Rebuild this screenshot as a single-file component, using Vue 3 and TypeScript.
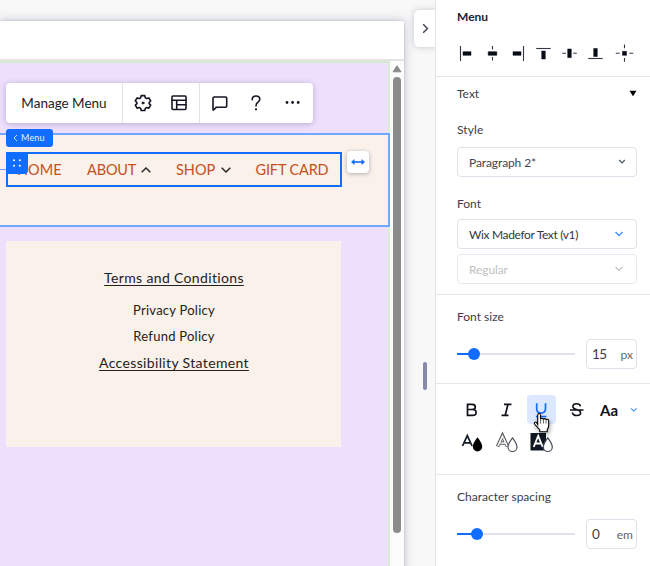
<script setup lang="ts">
import { ref } from 'vue'

interface Align { id: string; thin: string; thick: string }
interface Slider { label: string; value: string; unit: string; fill: number; cls: string }

const aligns: Align[] = [
  { id: 'left', thin: 'M1.5 2v15', thick: 'M4 7.7h8v3.6h-8z' },
  { id: 'center', thin: 'M9.5 2v3.5M9.5 13v3.5', thick: 'M5.2 7.7h8.6v3.6h-8.6z' },
  { id: 'right', thin: 'M15.5 2v15', thick: 'M5 7.7h8v3.6h-8z' },
  { id: 'top', thin: 'M2.2 4.5h14.5', thick: 'M7.7 7h3.6v8h-3.6z' },
  { id: 'middle', thin: 'M2.3 9.3h3.6M13.2 9.3h3.6', thick: 'M7.7 5h3.6v8.6h-3.6z' },
  { id: 'bottom', thin: 'M2.2 14.5h14.5', thick: 'M7.7 4.5h3.6v8h-3.6z' },
  { id: 'both', thin: 'M9.5 .5v3.8M9.5 14v3.8M.8 9.3h3.9M14.4 9.3h3.9', thick: 'M7.500 7.300h4v4h-4z' },
]
const sizeSlider: Slider = { label: 'Font size', value: '15', unit: 'px', fill: 17, cls: 'size' }
const spacingSlider: Slider = { label: 'Character spacing', value: '0', unit: 'em', fill: 20, cls: 'spacing' }
const underlined = ref(true)
</script>

<template>
  <div class="editor">
    <main class="stage">
      <div class="browser">
        <div class="browser-bar"></div>
        <div class="viewport">
          <div class="site">
            <section class="header-section">
              <nav class="nav">
                <span class="item home">HOME</span>
                <span class="item about">ABOUT</span>
                <svg class="caret" width="12" height="8" viewBox="0 0 12 8"><path d="M1.7 6.3 6 2l4.3 4.3" /></svg>
                <span class="item shop">SHOP</span>
                <svg class="caret" width="12" height="8" viewBox="0 0 12 8"><path d="M1.7 1.7 6 6l4.3-4.3" /></svg>
                <span class="item gift">GIFT CARD</span>
              </nav>
            </section>
            <section class="links">
              <a class="terms">Terms and Conditions</a>
              <span class="privacy">Privacy Policy</span>
              <span class="refund">Refund Policy</span>
              <a class="access">Accessibility Statement</a>
            </section>
          </div>
          <div class="scrollbar">
            <svg width="10" height="8" viewBox="0 0 10 8"><path d="M5 .8 9 6.8H1z" fill="#8b8b8b" stroke="#8b8b8b" stroke-linejoin="round" /></svg>
            <div class="scroll-thumb"></div>
          </div>
        </div>
      </div>

      <div class="toolbar">
        <button class="manage">Manage Menu</button>
        <div class="tools pair">
          <svg width="18" height="18" viewBox="0 0 18 18" class="line">
            <path d="M7.200 1.600h3.600l.5 2.100 1.500.9 2.100-.7 1.800 3.100-1.600 1.500v1.100l1.600 1.500-1.800 3.100-2.100-.7-1.500.9-.5 2.100H7.200l-.5-2.100-1.500-.9-2.100.7-1.800-3.100 1.600-1.500V8.500L1.300 7l1.800-3.100 2.100.7 1.500-.9z" />
            <circle cx="9" cy="9" r="1" fill="#161624" stroke-width="1" />
          </svg>
          <svg width="18" height="18" viewBox="0 0 18 18" class="line">
            <rect x="2" y="2" width="14" height="13.500" rx="1" /><path d="M2 6.300h14M6.700 6.300v9M6.700 10.700H16" />
          </svg>
        </div>
        <div class="tools trio">
          <svg width="18" height="18" viewBox="0 0 18 18" class="line"><path d="M2 16V4.200Q2 3 3.200 3H14.500Q15.700 3 15.700 4.200V12Q15.700 13.200 14.500 13.200H5.500L2.600 16z" /></svg>
          <svg width="18" height="18" viewBox="0 0 18 18" class="line"><path d="M5.200 5.700Q5.200 2 9 2T12.800 5.300Q12.800 7.200 10.700 8.500 9 9.500 9 12" /><circle cx="9" cy="15.300" r=".5" stroke-width="1.200" /></svg>
          <svg width="18" height="18" viewBox="0 0 18 18" fill="#161624"><circle cx="4" cy="8.500" r="1.400" /><circle cx="9.600" cy="8.500" r="1.400" /><circle cx="15.200" cy="8.500" r="1.400" /></svg>
        </div>
      </div>

      <div class="guide"></div>
      <div class="tag">
        <svg width="5" height="8" viewBox="0 0 5 8"><path d="M4 1 1 4l3 3" fill="none" stroke="#c3dbff" /></svg>
        <span>Menu</span>
      </div>
      <div class="handle">
        <svg width="10" height="10" viewBox="0 0 10 10" fill="#fff">
          <circle cx="2" cy="1.300" r="1" /><circle cx="7.800" cy="1.300" r="1" /><circle cx="2" cy="6.800" r="1" /><circle cx="7.800" cy="6.800" r="1" />
        </svg>
      </div>
      <div class="stretch">
        <svg width="16" height="10" viewBox="0 0 16 10" fill="none" stroke="#116dff" stroke-width="1.600"><path d="M2 5h12" /><path d="M4.500 2 1 5l3.500 3zM11.500 2 15 5l-3.500 3z" fill="#116dff" stroke="none" /></svg>
      </div>
      <div class="collapse">
        <svg width="7" height="11" viewBox="0 0 7 11"><path d="M1.200 1.200 5.500 5.500 1.200 9.800" fill="none" stroke="#404052" stroke-width="1.400" /></svg>
      </div>
      <div class="splitter"></div>
    </main>

    <aside class="panel">
      <header class="panel-head">
        <h1>Menu</h1>
        <div class="aligns">
          <svg v-for="a in aligns" :key="a.id" :class="a.id" width="19" height="19" viewBox="0 0 19 19">
            <path :d="a.thin" fill="none" stroke="#343747" stroke-width="1.100" />
            <path :d="a.thick" fill="#090d18" stroke="#090d18" stroke-width=".5" stroke-linejoin="round" />
          </svg>
        </div>
      </header>

      <section class="text-group">
        <div class="group-title"><span class="t-text">Text</span><svg width="8" height="7" viewBox="0 0 8 7"><path d="M.5.800h7L4 6.300z" /></svg></div>
        <label class="t-style">Style</label>
        <div class="select style-select"><span>Paragraph 2*</span><svg width="8" height="6" viewBox="0 0 8 6"><path d="M1.200 1 4 3.800 6.800 1" /></svg></div>
        <label class="t-font">Font</label>
        <div class="select font-select"><span>Wix Madefor Text (v1)</span><svg width="10" height="6" viewBox="0 0 10 6"><path d="M1.500 1 5 4.500 8.500 1" /></svg></div>
        <div class="select weight-select"><span>Regular</span><svg width="10" height="6" viewBox="0 0 10 6"><path d="M1.500 1 5 4.500 8.500 1" /></svg></div>
      </section>

      <section class="slider-group" :class="sizeSlider.cls">
        <label>{{ sizeSlider.label }}</label>
        <div class="slider-row">
          <div class="track"><div class="fill" :style="{ width: sizeSlider.fill + 'px' }"></div><div class="knob"></div></div>
          <div class="field"><b>{{ sizeSlider.value }}</b><span>{{ sizeSlider.unit }}</span></div>
        </div>
      </section>

      <section class="format">
        <div class="format-row">
          <svg class="fi" width="29" height="29" viewBox="0 0 29 29"><path d="M10.500 9.300h4.600q3.200 0 3.200 2.600t-3.200 2.600h-4.600zM10.500 14.500h5q3.600 0 3.600 2.900t-3.600 2.900h-5z" /></svg>
          <svg class="fi" width="29" height="29" viewBox="0 0 29 29"><path d="M12 9.300h7.500M9.500 20.300h7M16 9.300l-2.800 11" /></svg>
          <button class="fi under" :class="{ on: underlined }">
            <svg width="29" height="29" viewBox="0 0 29 29"><path d="M9.700 8.300v5.500q0 4.200 4.400 4.200t4.400-4.200V8.300M9 21.500h10.500" /></svg>
          </button>
          <svg class="fi strike" width="29" height="29" viewBox="0 0 29 29"><path d="M18.500 11.300Q18 8.700 14.500 8.700T10.800 11.500Q10.800 13.700 14.500 14.500T18.700 17.900Q18.500 20.500 14.700 20.500T10.300 17.500M8 15h13.500" /></svg>
          <span class="case">Aa</span>
          <svg class="drop" width="8" height="6" viewBox="0 0 8 6"><path d="M1 1.300 3.800 4 6.600 1.300" fill="none" stroke="#4d91ff" stroke-width="1.100" /></svg>
        </div>
        <div class="format-row second">
          <svg width="24" height="22" viewBox="0 0 24 22"><path d="M1.500 13 6.300 2.600 11.100 13M3.200 9.800h6.200" fill="none" stroke="#111a26" stroke-width="1.700" /><path d="M16.500 4.200q4.700 6 4.700 9.500a4.700 4.800 0 0 1-9.400 0q0-3.500 4.700-9.500z" fill="#000" /></svg>
          <svg width="24" height="22" viewBox="0 0 24 22"><path d="M1.500 13.500 6.500 2.600 11.500 13.500M3.500 10h6" fill="none" stroke="#555" stroke-width="3.400" /><path d="M1.800 13 6.500 3.200 11.200 13M3.800 10h5.800" fill="none" stroke="#fff" stroke-width="1.600" /><path d="M3.500 13 7.500 4" stroke="#888" stroke-width=".6" /><path d="M16.500 4.800q4.500 6 4.500 9.100a4.500 4.600 0 0 1-9 0q0-3.100 4.500-9.100z" fill="#fff" stroke="#424956" stroke-width="1.100" /></svg>
          <svg width="24" height="22" viewBox="0 0 24 22"><path d="M-.5 0h15.500v17.500H-.5z" fill="#101722" /><path d="M2.700 14 7.200 3l4.500 11M4.300 10.500h5.800" fill="none" stroke="#fff" stroke-width="1.800" /><path d="M16.800 4.800q4.500 6 4.500 9.100a4.500 4.600 0 0 1-9 0q0-3.100 4.500-9.100z" fill="#fff" stroke="#424956" stroke-width="1.200" /></svg>
        </div>
        <svg class="cursor" width="20" height="21" viewBox="0 0 20 21"><path d="M5.700 12.500V3.200q0-1.700 1.400-1.700t1.400 1.700v4.300q0-1.200 1.300-1.200t1.500 1.300q.1-1 1.300-1t1.500 1.400q.2-.8 1.300-.8t1.300 1.700v4.600q0 2-1.500 4v2.200H7.700v-2L3 12.600q-1.200-1.500-.3-2.300t1.900.3z" fill="#fff" stroke="#000" stroke-width="1.100" /><path d="M8.600 7.500v4M11.400 8v3.500M14.100 8.500v3" stroke="#333" stroke-width=".8" /></svg>
      </section>

      <section class="slider-group" :class="spacingSlider.cls">
        <label>{{ spacingSlider.label }}</label>
        <div class="slider-row">
          <div class="track"><div class="fill" :style="{ width: spacingSlider.fill + 'px' }"></div><div class="knob"></div></div>
          <div class="field"><b>{{ spacingSlider.value }}</b><span>{{ spacingSlider.unit }}</span></div>
        </div>
      </section>
    </aside>
  </div>
</template>

<style>
body { overflow: hidden; }
</style>

<style scoped>
* { box-sizing: border-box; }
.editor { display: grid; grid-template-columns: 435px 215px; width: 650px; height: 566px; overflow: hidden; font-family: Lato, "Open Sans", sans-serif; background: #f8f8f8; }
svg { display: block; flex: none; }
button { border: 0; padding: 0; background: none; font: inherit; }
span, label, a { white-space: nowrap; }

.stage { position: relative; padding-top: 21px; overflow: hidden; }
.browser { width: 404px; height: 560px; background: #fff; box-shadow: 0 0 10px rgba(60, 70, 120, .3), 0 0 2px rgba(60, 70, 100, .25); }
.browser-bar { height: 40px; border-bottom: 2px solid #e4e4e6; }
.viewport { display: flex; height: 520px; }
.site { width: 390px; border-top: 2px solid #d3ecd0; border-right: 2px solid #d3f0d1; background: #eee0fd; padding-top: 70px; }
.header-section { position: relative; width: 390px; height: 94px; border: 2px solid #70a7ff; border-left: 0; background: #f9f1ea; padding: 17px 0 0 6px; }
.nav { display: flex; align-items: center; width: 335.500px; height: 35px; border: 2px solid #116dff; padding: 0 0 0 9px; font-size: 14.500px; color: #c4501f; }
.item { flex: none; }
.home { width: 70px; }
.about { width: 53px; letter-spacing: -.15px; }
.shop { width: 44px; margin-left: 24px; }
.gift { margin-left: 23.500px; letter-spacing: -.15px; }
.caret { fill: none; stroke: #222; stroke-width: 1.400; }
.links { display: flex; flex-direction: column; align-items: center; width: 335px; height: 206px; margin: 14px 0 0 6px; padding: 27px 0 0 1px; background: #f9f1ea; color: #222; font-size: 14px; line-height: 20px; }
.links a { text-decoration: underline; text-underline-offset: 2px; text-decoration-thickness: 1px; }
.terms { letter-spacing: .35px; }
.privacy { margin-top: 12px; font-size: 13px; letter-spacing: .25px; }
.refund { margin-top: 6px; font-size: 13px; letter-spacing: .25px; }
.access { margin-top: 7px; letter-spacing: .35px; }
.scrollbar { display: flex; flex-direction: column; align-items: center; width: 14px; padding-top: 4px; background: #fcfcfc; }
.scroll-thumb { width: 8px; height: 456px; margin-top: 4px; border-radius: 4px; background: #8b8b8b; }

.toolbar { position: absolute; left: 6px; top: 83px; display: flex; width: 307px; height: 40px; border-radius: 4px; background: #fff; box-shadow: 0 1px 6px rgba(60, 40, 110, .3); }
.manage { width: 116px; font-size: 13.500px; color: #222; text-align: center; }
.tools { display: flex; align-items: center; border-left: 1px solid #e3e3e5; }
.pair { width: 77px; gap: 18px; padding-left: 11px; }
.trio { flex: 1; gap: 18px; padding-left: 11px; }
.line { fill: none; stroke: #161624; stroke-width: 1.600; stroke-linejoin: round; stroke-linecap: round; }
.guide { position: absolute; left: 0; top: 169px; width: 6px; border-top: 1px dashed #6aa2ff; }
.tag { position: absolute; left: 6px; top: 129px; display: flex; align-items: center; gap: 3px; width: 47px; height: 18px; padding: 0 0 1px 7px; border-radius: 3px; background: #116dff; color: #e6f0ff; font-size: 9px; letter-spacing: .2px; }
.handle { position: absolute; left: 6px; top: 153px; display: grid; place-items: center; width: 22px; height: 21px; border-radius: 0 0 4px; background: #116dff; }
.stretch { position: absolute; left: 347px; top: 151px; display: grid; place-items: center; width: 22px; height: 22px; border-radius: 4px; background: #fff; box-shadow: 0 1px 4px rgba(40, 40, 70, .35); }
.collapse { position: absolute; left: 414px; top: 10px; display: grid; place-items: center; width: 22px; height: 37px; border-radius: 5px 0 0 5px; background: #fff; box-shadow: 0 0 6px rgba(60, 70, 100, .28); }
.splitter { position: absolute; left: 423px; top: 362px; width: 4px; height: 28px; border-radius: 2px; background: #868aa9; }

.panel { position: relative; border-left: 1px solid #e4e4e8; background: #fff; color: #3b3d48; font-size: 12px; }
.panel-head { height: 77px; border-bottom: 1px solid #e6e6ea; padding: 9px 0 0 21px; }
h1 { margin: 0; font-size: 12px; line-height: 16px; font-weight: 700; color: #22232c; }
.aligns { display: flex; width: 180px; height: 19px; margin-top: 19px; margin-left: 2px; }
.aligns svg { margin-right: 7px; overflow: visible; }
.aligns .left { margin-right: 5px; }
.aligns .center { margin-right: 6px; }
.aligns .both { margin-right: 0; margin-left: 3px; }
.text-group { height: 218px; border-bottom: 1px solid #e6e6ea; padding: 8px 13px 0 21px; }
.text-group label { display: block; line-height: 16px; }
.group-title { display: flex; justify-content: space-between; align-items: center; height: 16px; }
.t-style { margin-top: 21px; letter-spacing: .1px; }
.t-font { margin-top: 19px; }
.select { display: flex; align-items: center; justify-content: space-between; width: 180px; height: 30px; border: 1px solid #dfe1ea; border-radius: 4px; padding: 0 12px 0 11px; color: #343640; }
.select svg { fill: none; stroke: #4a5663; stroke-width: 1.200; }
.style-select { margin-top: 9px; color: #3c4654; letter-spacing: -.1px; }
.style-select svg { margin-right: -2px; }
.font-select { margin-top: 7px; letter-spacing: -.35px; }
.font-select svg { stroke: #4d91ff; stroke-width: 1.500; }
.weight-select { margin-top: 5px; color: #bfbfc4; border-color: #e8e9ee; letter-spacing: -.1px; }
.weight-select svg { stroke: #bfbfc4; }
.slider-group { height: 89px; padding: 14px 13px 0 21px; border-bottom: 1px solid #e6e6ea; }
.slider-group label { display: block; line-height: 16px; }
.slider-row { display: flex; align-items: center; justify-content: space-between; margin-top: 14px; }
.spacing { border: 0; }
.track { display: flex; align-items: center; width: 118px; height: 12px; background: linear-gradient(#e1e2eb, #e1e2eb) 0 50% / 100% 2px no-repeat; }
.fill { height: 2px; background: #116dff; }
.knob { width: 12px; height: 12px; margin-left: -6px; border-radius: 50%; background: #116dff; }
.field { display: flex; align-items: center; justify-content: space-between; width: 51px; height: 30px; border: 1px solid #dfe1ea; border-radius: 4px; padding: 0 3px 0 5px; }
.field b { font-size: 13.500px; font-weight: 400; letter-spacing: -.5px; }
.field span { color: #62646e; }
.format { position: relative; height: 91px; border-bottom: 1px solid #e6e6ea; padding: 11px 0 0 21px; }
.format-row { display: flex; align-items: center; gap: 6px; height: 29px; }
.fi { fill: none; stroke: #101018; stroke-width: 1.700; }
.under { width: 29px; height: 29px; border-radius: 4px; }
.under.on { background: #dce8ff; stroke: #116dff; }
.strike { stroke-width: 1.500; }
.case { width: 24px; margin-left: 3px; font-size: 15px; font-weight: 700; color: #101018; }
.second { gap: 11px; height: 22px; margin: 9px 0 0 4px; }
.second svg { overflow: visible; }
.cursor { position: absolute; left: 96px; top: 28px; overflow: visible; filter: drop-shadow(1px 2px 2px rgba(0, 0, 0, .35)); }
</style>
